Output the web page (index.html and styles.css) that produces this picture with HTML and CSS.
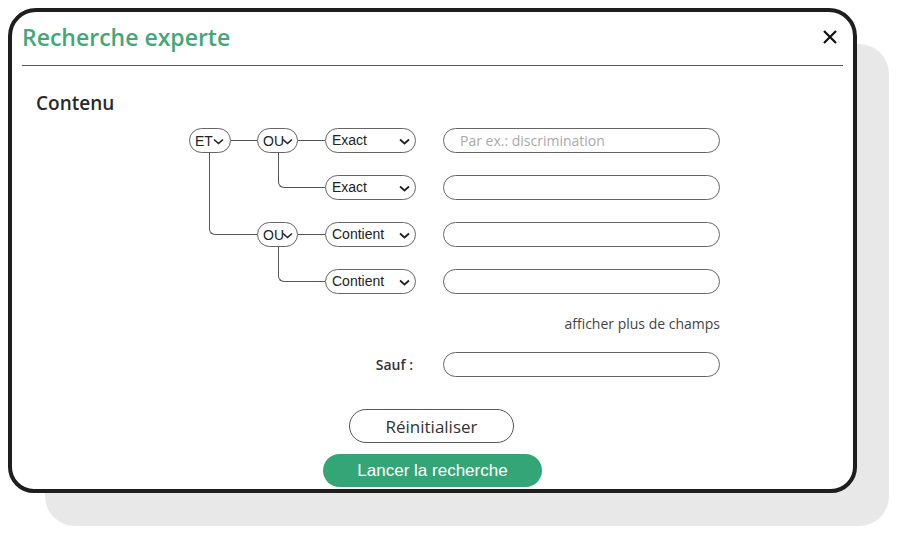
FILE: index.html
```html
<!DOCTYPE html>
<html lang="fr">
<head>
<meta charset="utf-8">
<title>Recherche experte</title>
<link rel="stylesheet" href="styles.css">
</head>
<body>
<div class="stage">
<div class="modal">
  <div class="header">
    <h1 class="title">Recherche experte</h1>
    <button class="close" aria-label="Fermer">
      <svg width="14" height="14" viewBox="0 0 14 14"><path d="M1 1 L13 13 M13 1 L1 13" stroke="#111" stroke-width="2.2" stroke-linecap="butt" fill="none"/></svg>
    </button>
  </div>
  <div class="divider"></div>
  <h2 class="section">Contenu</h2>
  <div class="form">
    <div class="tree">
      <span class="elbow elbow-et"></span>
      <span class="elbow elbow-ou1"></span>
      <span class="elbow elbow-ou2"></span>

      <div class="row">
        <div class="op op-et">ET<svg class="chev" width="11" height="7" viewBox="0 0 11 7"><polyline points="1,1.5 5.5,5.5 10,1.5" fill="none" stroke="#222" stroke-width="1.6"/></svg></div>
        <span class="conn c1"></span>
        <div class="op op-ou">OU<svg class="chev" width="11" height="7" viewBox="0 0 11 7"><polyline points="1,1.5 5.5,5.5 10,1.5" fill="none" stroke="#222" stroke-width="1.6"/></svg></div>
        <span class="conn c2"></span>
        <div class="sel">Exact<svg class="chev" width="11" height="7" viewBox="0 0 11 7"><polyline points="1,1.5 5.5,5.5 10,1.5" fill="none" stroke="#222" stroke-width="1.7"/></svg></div>
        <div class="field"><span class="ph">Par ex.: discrimination</span></div>
      </div>

      <div class="row">
        <span class="sp sp-full"></span>
        <div class="sel">Exact<svg class="chev" width="11" height="7" viewBox="0 0 11 7"><polyline points="1,1.5 5.5,5.5 10,1.5" fill="none" stroke="#222" stroke-width="1.7"/></svg></div>
        <div class="field"></div>
      </div>

      <div class="row">
        <span class="sp sp-et"></span>
        <div class="op op-ou">OU<svg class="chev" width="11" height="7" viewBox="0 0 11 7"><polyline points="1,1.5 5.5,5.5 10,1.5" fill="none" stroke="#222" stroke-width="1.6"/></svg></div>
        <span class="conn c2"></span>
        <div class="sel">Contient<svg class="chev" width="11" height="7" viewBox="0 0 11 7"><polyline points="1,1.5 5.5,5.5 10,1.5" fill="none" stroke="#222" stroke-width="1.7"/></svg></div>
        <div class="field"></div>
      </div>

      <div class="row">
        <span class="sp sp-full"></span>
        <div class="sel">Contient<svg class="chev" width="11" height="7" viewBox="0 0 11 7"><polyline points="1,1.5 5.5,5.5 10,1.5" fill="none" stroke="#222" stroke-width="1.7"/></svg></div>
        <div class="field"></div>
      </div>
    </div>

    <div class="more">afficher plus de champs</div>

    <div class="sauf">
      <label class="sauf-label">Sauf :</label>
      <div class="field"></div>
    </div>
  </div>

  <div class="actions">
    <button class="btn-reset">Réinitialiser</button>
    <button class="btn-go">Lancer la recherche</button>
  </div>
</div>
</div>
</body>
</html>
```

FILE: styles.css
```css
html, body {
  background: #ffffff;
}
body {
  margin: 8px;
  font-family: "Open Sans", "Liberation Sans", sans-serif;
  color: #333;
}
.stage {
  position: relative;
  width: 881px;
  height: 518px;
}
.stage::before {
  content: "";
  position: absolute;
  left: 37px;
  top: 36px;
  width: 844px;
  height: 482px;
  border-radius: 30px;
  background: #e8e8e8;
}
.modal {
  position: relative;
  box-sizing: border-box;
  width: 849px;
  height: 485px;
  border: 4px solid #1e1e1e;
  border-radius: 28px 28px 26px 26px;
  background: #fff;
  display: flex;
  flex-direction: column;
}
.header {
  display: flex;
  justify-content: space-between;
  align-items: flex-start;
  padding: 9px 16px 0 10px;
  height: 44px;
  box-sizing: border-box;
}
.title {
  margin: 0;
  font-size: 23px;
  line-height: 32px;
  font-weight: 600;
  color: #43a877;
}
.close {
  border: 0;
  background: none;
  padding: 0;
  margin-top: 9px;
  width: 14px;
  height: 14px;
  display: block;
}
.close svg { display: block; }
.divider {
  height: 1px;
  background: #555;
  margin: 9px 10px 0 10px;
}
.section {
  margin: 24px 0 0 24px;
  font-size: 19px;
  line-height: 26px;
  font-weight: 600;
  color: #2a2a2a;
}
.form {
  margin: 12px 0 0 177px;
  width: 531px;
  display: flex;
  flex-direction: column;
}
.tree {
  position: relative;
  display: flex;
  flex-direction: column;
  gap: 22px;
}
.row {
  display: flex;
  align-items: center;
  height: 25px;
}
.op, .sel, .field {
  box-sizing: border-box;
  height: 25px;
  border: 1px solid #666;
  border-radius: 12.5px;
  background: #fff;
  display: flex;
  align-items: center;
  font-family: "Liberation Sans", Arial, sans-serif;
  font-size: 14px;
  color: #222;
}
.op {
  padding-left: 5px;
}
.op-et { width: 42px; }
.op-ou { width: 41px; }
.op .chev { margin-left: 0px; margin-top: 2px; flex: none; }
.op-ou .chev { margin-left: -2px; }
.sel {
  width: 91px;
  padding: 0 5px 0 6px;
  justify-content: space-between;
  margin-top: -1px;
}
.sel .chev { margin-top: 3px; }
.field {
  width: 277px;
  margin-left: 27px;
  padding-left: 16px;
}
.ph {
  font-family: "Open Sans", sans-serif;
  font-size: 14px;
  color: #aaa;
}
.conn {
  height: 1px;
  background: #555;
}
.c1 { width: 26px; }
.c2 { width: 27px; }
.sp-full { width: 136px; flex: none; }
.sp-et { width: 68px; flex: none; }
.elbow {
  position: absolute;
  box-sizing: border-box;
  border-left: 1px solid #555;
  border-bottom: 1px solid #555;
  border-bottom-left-radius: 6px;
}
.elbow-et { left: 20px; top: 25px; width: 48px; height: 82px; }
.elbow-ou1 { left: 89px; top: 25px; width: 47px; height: 35px; }
.elbow-ou2 { left: 89px; top: 119px; width: 47px; height: 35px; }
.more {
  margin-top: 20px;
  text-align: right;
  font-size: 14px;
  line-height: 19px;
  color: #444;
}
.sauf {
  display: flex;
  align-items: center;
  justify-content: flex-end;
  margin-top: 19px;
}
.sauf-label {
  font-size: 14px;
  font-weight: 600;
  color: #333;
}
.sauf .field { margin-left: 30px; }
.actions {
  display: flex;
  flex-direction: column;
  align-items: center;
  margin-top: 32px;
  gap: 11px;
}
.btn-reset {
  box-sizing: border-box;
  width: 165px;
  height: 34px;
  border: 1px solid #555;
  border-radius: 17px;
  background: #fff;
  font-family: "Open Sans", sans-serif;
  font-size: 17px;
  color: #333;
  padding: 0;
  margin-left: -2px;
}
.btn-go {
  box-sizing: border-box;
  width: 219px;
  height: 33px;
  border: 0;
  border-radius: 16.5px;
  background: #34a577;
  font-family: "Liberation Sans", Arial, sans-serif;
  font-size: 17px;
  color: #fff;
  padding: 0;
}
```
